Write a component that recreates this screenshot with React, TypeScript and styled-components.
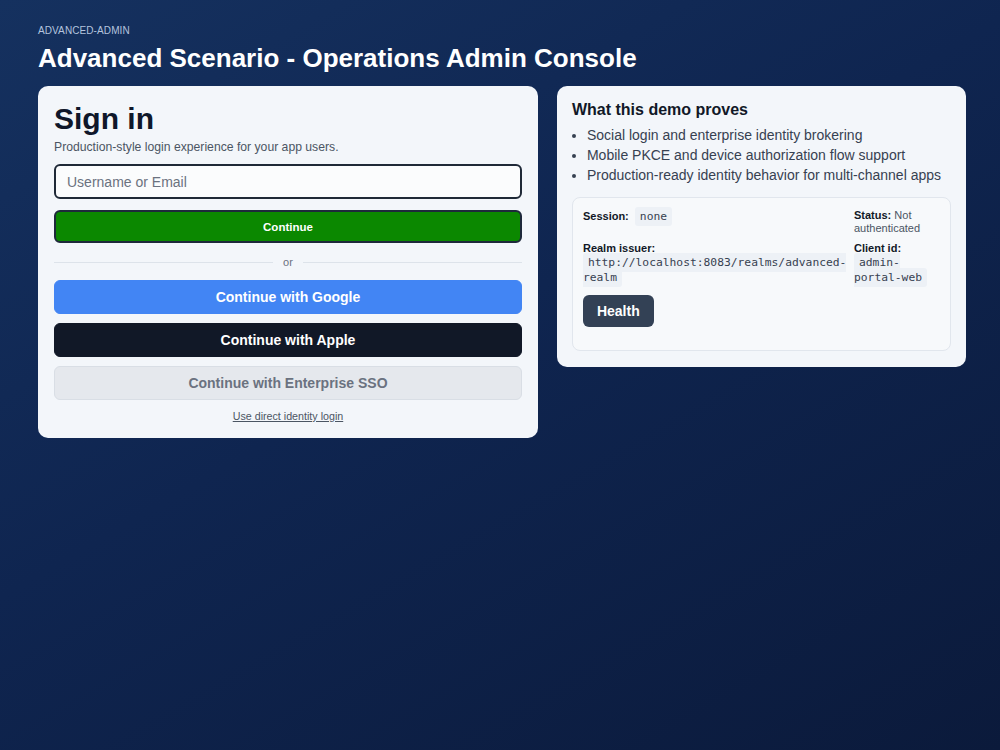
import React from "react";
import styled, { createGlobalStyle } from "styled-components";

const Global = createGlobalStyle`
  html, body { margin: 0; padding: 0; }
  body {
    min-height: 750px;
    background: linear-gradient(150deg, #15315f 0%, #0f2550 45%, #0b1a3b 100%);
    font-family: "Liberation Sans", Arial, sans-serif;
  }
  * { box-sizing: border-box; }
`;

const Page = styled.main`
  padding: 23px 34px 40px 38px;
  min-height: 750px;
`;

const Eyebrow = styled.div`
  font-size: 10px;
  letter-spacing: 0.1px;
  color: #b4c4de;
  line-height: 16px;
`;

const Title = styled.h1`
  margin: 3px 0 0;
  font-size: 26px;
  line-height: 32px;
  font-weight: 700;
  color: #ffffff;
`;

const Columns = styled.div`
  margin-top: 12px;
  display: grid;
  grid-template-columns: minmax(0, 1.1fr) minmax(0, 0.9fr);
  gap: 19px;
  align-items: start;
`;

const Card = styled.section<{ $pad: string }>`
  background: #f3f6fa;
  border-radius: 10px;
  padding: ${(p) => p.$pad};
  color: #0f172a;
`;

const SignTitle = styled.h2`
  margin: 0;
  font-size: 30px;
  line-height: 34px;
  font-weight: 700;
  color: #0f172a;
`;

const Sub = styled.p`
  margin: 3px 0 0;
  font-size: 12.2px;
  line-height: 16px;
  color: #4b5563;
`;

const Input = styled.input`
  display: block;
  width: 100%;
  margin-top: 9px;
  height: 35px;
  border: 2px solid #1f2937;
  border-radius: 6px;
  background: #fbfcfd;
  padding: 0 11px;
  font-family: "Liberation Sans", Arial, sans-serif;
  font-size: 14px;
  color: #111827;
  outline: none;
  &::placeholder { color: #6b7280; }
`;

const PrimaryButton = styled.button`
  display: block;
  width: 100%;
  margin-top: 11px;
  height: 33px;
  border: 2px solid #1e293b;
  border-radius: 6px;
  background: #0b8800;
  color: #ffffff;
  font-family: "Liberation Sans", Arial, sans-serif;
  font-size: 11.5px;
  font-weight: 700;
`;

const Divider = styled.div`
  display: flex;
  align-items: center;
  gap: 10px;
  margin: 12px 0 11px;
  font-size: 11px;
  line-height: 14px;
  color: #6b7280;
  &::before, &::after {
    content: "";
    flex: 1;
    height: 1px;
    background: #dde3ea;
  }
`;

const variants = {
  google: { bg: "#4285f4", fg: "#ffffff", border: "#4285f4" },
  apple: { bg: "#111827", fg: "#ffffff", border: "#111827" },
  sso: { bg: "#e5e8ed", fg: "#6b7280", border: "#d9dee5" },
};

const SocialButton = styled.button<{ $v: keyof typeof variants }>`
  display: block;
  width: 100%;
  height: 34px;
  border-radius: 6px;
  border: 1px solid ${(p) => variants[p.$v].border};
  background: ${(p) => variants[p.$v].bg};
  color: ${(p) => variants[p.$v].fg};
  font-family: "Liberation Sans", Arial, sans-serif;
  font-size: 14px;
  font-weight: 700;
  & + & { margin-top: 9px; }
`;

const LinkRow = styled.div`
  text-align: center;
  margin-top: 9px;
  line-height: 12px;
`;

const TextLink = styled.a`
  font-size: 10.7px;
  color: #4b5563;
  text-decoration: underline;
`;

const DemoTitle = styled.h3`
  margin: 0;
  font-size: 16px;
  line-height: 20px;
  font-weight: 700;
  color: #111827;
`;

const List = styled.ul`
  margin: 5px 0 0;
  padding-left: 15px;
  font-size: 14px;
  line-height: 20px;
  color: #374151;
`;

const InfoBox = styled.div`
  margin-top: 12px;
  border: 1px solid #e1e6ed;
  border-radius: 8px;
  background: #f7f9fb;
  padding: 8px 10px 23px;
`;

const InfoGrid = styled.div`
  display: grid;
  grid-template-columns: minmax(0, 1fr) 86px;
  column-gap: 6px;
  row-gap: 7px;
`;

const Field = styled.div<{ $offset?: number }>`
  font-size: 11px;
  line-height: 13px;
  color: #4b5563;
  padding-top: ${(p) => p.$offset ?? 0}px;
`;

const Label = styled.strong`
  color: #111827;
  font-weight: 700;
`;

const Code = styled.code`
  font-family: "DejaVu Sans Mono", "Liberation Mono", monospace;
  font-size: 11.3px;
  line-height: 15px;
  background: #edf1f6;
  color: #374151;
  border-radius: 3px;
  padding: 3px 5px;
  word-break: break-word;
`;

const InlineField = styled(Field)`
  line-height: 21px;
  ${Code} { margin-left: 3px; }
`;

const BlockCode = styled.div`
  line-height: 15px;
`;

const HealthButton = styled.button`
  margin-top: 10px;
  height: 32px;
  padding: 0 14px;
  border: none;
  border-radius: 6px;
  background: #334155;
  color: #ffffff;
  font-family: "Liberation Sans", Arial, sans-serif;
  font-size: 14px;
  font-weight: 700;
`;

export default function App() {
  return (
    <>
      <Global />
      <Page>
        <Eyebrow>ADVANCED-ADMIN</Eyebrow>
        <Title>Advanced Scenario - Operations Admin Console</Title>
        <Columns>
          <Card $pad="16px">
            <SignTitle>Sign in</SignTitle>
            <Sub>Production-style login experience for your app users.</Sub>
            <Input placeholder="Username or Email" />
            <PrimaryButton>Continue</PrimaryButton>
            <Divider>or</Divider>
            <SocialButton $v="google">Continue with Google</SocialButton>
            <SocialButton $v="apple">Continue with Apple</SocialButton>
            <SocialButton $v="sso">Continue with Enterprise SSO</SocialButton>
            <LinkRow>
              <TextLink href="#">Use direct identity login</TextLink>
            </LinkRow>
          </Card>
          <Card $pad="14px 15px 16px">
            <DemoTitle>What this demo proves</DemoTitle>
            <List>
              <li>Social login and enterprise identity brokering</li>
              <li>Mobile PKCE and device authorization flow support</li>
              <li>Production-ready identity behavior for multi-channel apps</li>
            </List>
            <InfoBox>
              <InfoGrid>
                <InlineField>
                  <Label>Session:</Label> <Code>none</Code>
                </InlineField>
                <Field $offset={3}>
                  <Label>Status:</Label> Not authenticated
                </Field>
                <Field>
                  <Label>Realm issuer:</Label>
                  <BlockCode>
                    <Code>http://localhost:8083/realms/advanced-realm</Code>
                  </BlockCode>
                </Field>
                <Field>
                  <Label>Client id:</Label>
                  <BlockCode>
                    <Code>admin-portal-web</Code>
                  </BlockCode>
                </Field>
              </InfoGrid>
              <HealthButton>Health</HealthButton>
            </InfoBox>
          </Card>
        </Columns>
      </Page>
    </>
  );
}
